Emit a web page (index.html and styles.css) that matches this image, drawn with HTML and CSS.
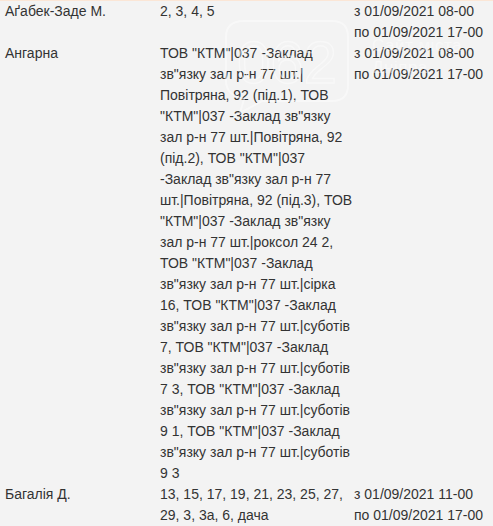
FILE: index.html
```html
<!DOCTYPE html>
<html lang="uk">
<head>
<meta charset="utf-8">
<link rel="stylesheet" href="styles.css">
</head>
<body>
<div class="strip"></div>
<div class="wrap">
<table class="outages">
  <colgroup><col class="c-street"><col class="c-houses"><col class="c-time"></colgroup>
  <tbody>
    <tr>
      <td>Аґабек-Заде М.</td>
      <td>2, 3, 4, 5</td>
      <td><span class="t">з 01/09/2021 08-00</span><span class="t">по 01/09/2021 17-00</span></td>
    </tr>
    <tr>
      <td>Ангарна</td>
      <td>ТОВ "КТМ"|037 -Заклад зв"язку зал р-н 77 шт.|Повітряна, 92 (під.1), ТОВ "КТМ"|037 -Заклад зв"язку зал р-н 77 шт.|Повітряна, 92 (під.2), ТОВ "КТМ"|037 -Заклад зв"язку зал р-н 77 шт.|Повітряна, 92 (під.3), ТОВ "КТМ"|037 -Заклад зв"язку зал р-н 77 шт.|роксол 24 2, ТОВ "КТМ"|037 -Заклад зв"язку зал р-н 77 шт.|сірка 16, ТОВ "КТМ"|037 -Заклад зв"язку зал р-н 77 шт.|суботів 7, ТОВ "КТМ"|037 -Заклад зв"язку зал р-н 77 шт.|суботів 7 3, ТОВ "КТМ"|037 -Заклад зв"язку зал р-н 77 шт.|суботів 9 1, ТОВ "КТМ"|037 -Заклад зв"язку зал р-н 77 шт.|суботів 9 3</td>
      <td><span class="t">з 01/09/2021 08-00</span><span class="t">по 01/09/2021 17-00</span></td>
    </tr>
    <tr>
      <td>Багалія Д.</td>
      <td>13, 15, 17, 19, 21, 23, 25, 27, 29, 3, 3а, 6, дача</td>
      <td><span class="t">з 01/09/2021 11-00</span><span class="t">по 01/09/2021 17-00</span></td>
    </tr>
  </tbody>
</table>
<div class="watermark" aria-hidden="true">
  <svg class="wm-logo" width="130" height="100" viewBox="0 0 130 100">
    <path d="M22 6 H110 Q126 6 126 22 V70 Q126 86 110 86 H40 L18 98 L22 84 Q4 80 4 66 V22 Q4 6 22 6 Z" fill="none" stroke="#ffffff" stroke-width="2"/>
    <text x="65" y="68" text-anchor="middle" font-family="Liberation Sans, Arial, sans-serif" font-size="60" fill="none" stroke="#ffffff" stroke-width="1.4">062</text>
  </svg>
  <div class="wm-text">
    <span>Сайт міста</span>
    <span>Дніпра</span>
  </div>
</div>
</div>
</body>
</html>
```

FILE: styles.css
```css
html, body {
  margin: 0;
  padding: 0;
  background: #f3f3f3;
}

body {
  width: 493px;
  height: 526px;
  overflow: hidden;
  font-family: "Liberation Sans", Arial, sans-serif;
  font-size: 14px;
  line-height: 21px;
  color: #333333;
}

.strip {
  height: 1px;
  background: #fbe6d6;
}

.wrap {
  position: relative;
}

.outages {
  border-collapse: collapse;
  table-layout: fixed;
  width: 493px;
}

.c-street { width: 155px; }
.c-houses { width: 199px; }
.c-time { width: 139px; }

.outages td {
  padding: 0;
  vertical-align: top;
}

.outages td:nth-child(1) { padding-left: 5px; }
.outages td:nth-child(2) { padding-left: 5px; }
.outages td:nth-child(3) { padding-left: 0; }

.t {
  display: block;
  white-space: nowrap;
}

.watermark {
  position: absolute;
  left: 222px;
  top: 14px;
  display: flex;
  gap: 20px;
  opacity: 0.45;
  pointer-events: none;
}

.wm-text {
  display: flex;
  flex-direction: column;
  margin-top: 20px;
  color: #ffffff;
  font-size: 17px;
  line-height: 22px;
  letter-spacing: 0.5px;
}
```
